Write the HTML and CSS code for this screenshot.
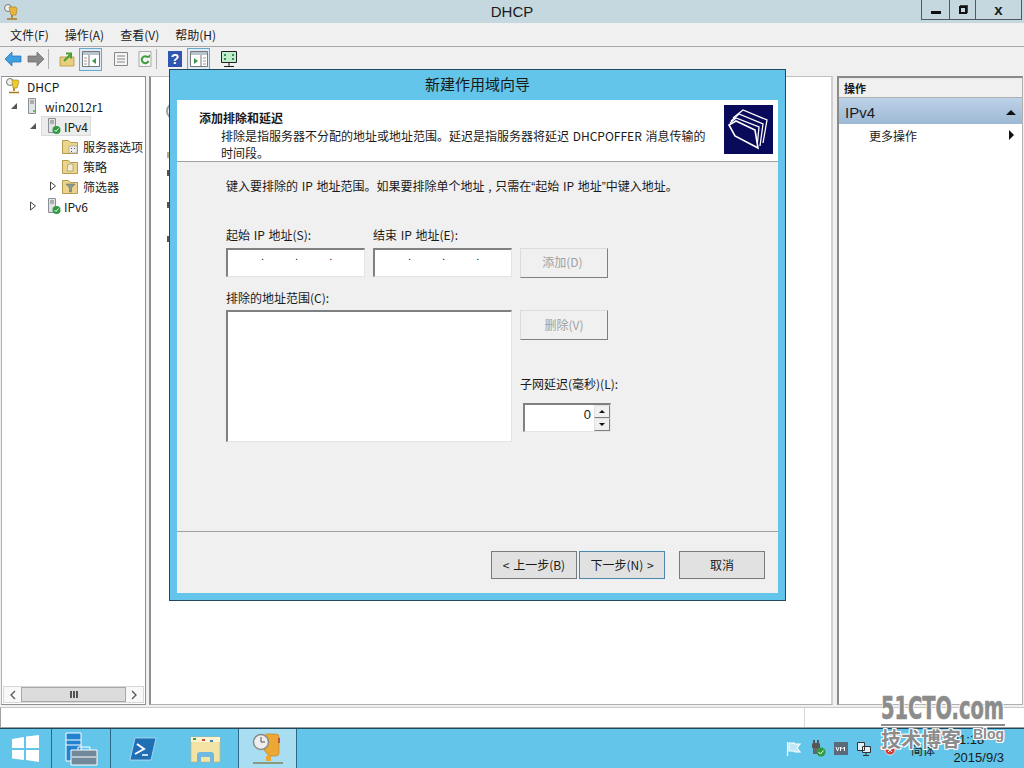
FILE: index.html
```html
<!DOCTYPE html>
<html lang="zh-CN">
<head>
    <meta charset="UTF-8">
    <title>DHCP</title>
    <link rel="stylesheet" href="styles.css">
</head>
<body>
    <div class="titlebar">
        <svg class="app-icon" width="16" height="18" viewBox="0 0 16 18"><circle cx="5" cy="5" r="3.500" fill="#eee" stroke="#777"/><path d="M6 4h7l1 2-1 6H8z" fill="#e8b53c" stroke="#a87a1c" stroke-width=".6"/><path d="M9 12v3M4 16h10" stroke="#a87a1c" stroke-width="1.600"/></svg>
        <span class="title-text">DHCP</span>
        <div class="win-btns">
            <div class="win-btn btn-min"><i></i></div>
            <div class="win-btn btn-max"><i></i></div>
            <div class="win-btn btn-close">x</div>
        </div>
    </div>
    <div class="menubar">
        <span>文件(F)</span>
        <span>操作(A)</span>
        <span>查看(V)</span>
        <span>帮助(H)</span>
    </div>
    <div class="toolbar">
        <svg class="tb-back" width="18" height="16" viewBox="0 0 18 16"><path d="M1 8l7-7v4h9v6H8v4z" fill="#3f9fe0" stroke="#1f6fb0" stroke-width=".7"/></svg>
        <svg class="tb-forward" width="18" height="16" viewBox="0 0 18 16"><path d="M17 8l-7-7v4H1v6h9v4z" fill="#8a8a8a" stroke="#666" stroke-width=".7"/></svg>
        <div class="tb-sep tb-sep-a"></div>
        <svg class="tb-up" width="16" height="16" viewBox="0 0 16 16"><path d="M1 6h14v9H1z" fill="#e9cf7d" stroke="#a98b35" stroke-width=".7"/><path d="M5 10l6-6M7 2.500h5v5" fill="none" stroke="#4d9e2e" stroke-width="2"/></svg>
        <div class="tb-toggle"><svg width="18" height="16" viewBox="0 0 18 16"><path d="M.5.500h17v15H.5z" fill="#fff" stroke="#777"/><path d="M1 1h16v3H1z" fill="#b9c4cc"/><path d="M7 4v11" stroke="#777"/><path d="M2 7h3M2 10h3M2 13h3" stroke="#999"/><path d="M14 7v6l-4-3z" fill="#3a9a4a"/></svg></div>
        <svg class="tb-list" width="16" height="16" viewBox="0 0 16 16"><path d="M1.500 1.500h13v13h-13z" fill="#f4f4f4" stroke="#888"/><path d="M4 5h8M4 8h8M4 11h8" stroke="#888"/></svg>
        <svg class="tb-refresh" width="14" height="16" viewBox="0 0 14 16"><path d="M1 .5h12v15H1z" fill="#f4f4f4" stroke="#aaa"/><path d="M10 6.500A3.500 3.500 0 1 0 10.500 10" fill="none" stroke="#3d9a3d" stroke-width="2"/><path d="M8 6.500h4v-3z" fill="#3d9a3d"/></svg>
        <div class="tb-sep tb-sep-b"></div>
        <div class="tb-help">?</div>
        <div class="tb-toggle tb-toggle-b"><svg width="18" height="16" viewBox="0 0 18 16"><path d="M.5.500h17v15H.5z" fill="#fff" stroke="#777"/><path d="M1 1h16v3H1z" fill="#b9c4cc"/><path d="M11 4v11" stroke="#777"/><path d="M13 7h3M13 10h3M13 13h3" stroke="#999"/><path d="M4 7v6l4-3z" fill="#3a9a4a"/></svg></div>
        <svg class="tb-monitor" width="16" height="17" viewBox="0 0 16 17"><path d="M.5.500h15v11H.5z" fill="#bfeecb" stroke="#222"/><path d="M3 3h2v2H3zM3 7h2v2H3zM11 3h2v2h-2zM11 7h2v2h-2z" fill="#3a8a5a"/><path d="M8 12v3M3 15.500h10" stroke="#222"/></svg>
    </div>

    <div class="workspace">
        <div class="tree-pane">
            <div class="tree">
                <div class="tree-row root-row">
                    <svg class="node-icon" width="16" height="18" viewBox="0 0 16 18"><circle cx="5" cy="5" r="3.500" fill="#eee" stroke="#777"/><path d="M7 3h6l1 2-2 6H8z" fill="#e8cf2c" stroke="#a87a1c" stroke-width=".6"/><path d="M9 11v3M4 15.500h10" stroke="#a87a1c" stroke-width="1.600"/></svg>
                    <span>DHCP</span>
                </div>
                <div class="tree-row indent-1">
                    <svg class="tw" width="6" height="8" viewBox="0 0 6 8"><path d="M6 1v6H0z" fill="#555"/></svg>
                    <svg class="node-icon" width="12" height="16" viewBox="0 0 12 16"><path d="M2.500.5h7v15h-7z" fill="#dfe3e6" stroke="#8a8f94"/><path d="M4 3h4M4 5h4" stroke="#777"/><circle cx="8" cy="13" r="1" fill="#4a4"/></svg>
                    <span>win2012r1</span>
                </div>
                <div class="tree-row indent-2">
                    <svg class="tw" width="6" height="8" viewBox="0 0 6 8"><path d="M6 1v6H0z" fill="#555"/></svg>
                    <span class="node-box selected">
                        <svg class="node-icon" width="14" height="17" viewBox="0 0 14 17"><path d="M1.500.5h7v14h-7z" fill="#dfe3e6" stroke="#8a8f94"/><path d="M3 3h4M3 5h4" stroke="#777"/><circle cx="9.500" cy="12" r="4" fill="#2f9a3f"/><path d="M7.500 12l1.500 1.500 2.500-3" fill="none" stroke="#fff"/></svg>
                        <span>IPv4</span>
                    </span>
                </div>
                <div class="tree-row indent-3">
                    <svg class="node-icon" width="16" height="15" viewBox="0 0 16 15"><path d="M.5 14.500v-13h6l2 2h7v11z" fill="#ecd48a" stroke="#b79c50"/><path d="M7 7h8v7H7z" fill="#eee" stroke="#999" stroke-width=".6"/><path d="M9 9h1v1H9zM12 9h1v1h-1zM9 12h1v1H9z" fill="#555"/></svg>
                    <span>服务器选项</span>
                </div>
                <div class="tree-row indent-3">
                    <svg class="node-icon" width="16" height="15" viewBox="0 0 16 15"><path d="M.5 14.500v-13h6l2 2h7v11z" fill="#ecd48a" stroke="#b79c50"/><path d="M6 5h5v7H5z" fill="#f5ecc8" stroke="#888" stroke-width=".6"/></svg>
                    <span>策略</span>
                </div>
                <div class="tree-row indent-2b">
                    <svg class="tw" width="6" height="10" viewBox="0 0 6 10"><path d="M.5 1l5 4-5 4z" fill="#fff" stroke="#444"/></svg>
                    <svg class="node-icon" width="16" height="15" viewBox="0 0 16 15"><path d="M.5 14.500v-13h6l2 2h7v11z" fill="#ecd48a" stroke="#b79c50"/><path d="M4 5h9l-3.500 4v4h-2V9z" fill="#8b9a8f" stroke="#666" stroke-width=".5"/></svg>
                    <span>筛选器</span>
                </div>
                <div class="tree-row indent-2">
                    <svg class="tw" width="6" height="10" viewBox="0 0 6 10"><path d="M.5 1l5 4-5 4z" fill="#fff" stroke="#444"/></svg>
                    <span class="node-box">
                        <svg class="node-icon" width="14" height="17" viewBox="0 0 14 17"><path d="M1.500.5h7v14h-7z" fill="#dfe3e6" stroke="#8a8f94"/><path d="M3 3h4M3 5h4" stroke="#777"/><circle cx="9.500" cy="12" r="4" fill="#2f9a3f"/><path d="M7.500 12l1.500 1.500 2.500-3" fill="none" stroke="#fff"/></svg>
                        <span>IPv6</span>
                    </span>
                </div>
            </div>
            <div class="hscroll">
                <div class="sb-btn">
                    <svg width="7" height="10" viewBox="0 0 7 10"><path d="M6 1L2 5l4 4" fill="none" stroke="#555" stroke-width="1.300"/></svg>
                </div>
                <div class="sb-thumb"><i></i><i></i><i></i></div>
                <div class="sb-btn">
                    <svg width="7" height="10" viewBox="0 0 7 10"><path d="M1 1l4 4-4 4" fill="none" stroke="#555" stroke-width="1.300"/></svg>
                </div>
            </div>
        </div>
        <div class="middle-pane">
            <!-- only the left edge of this page shows beside the dialog -->
            <div class="mid-logo"></div>
            <i class="mid-mark"></i>
            <i class="mid-mark"></i>
            <i class="mid-mark mid-mark-b"></i>
            <i class="mid-mark mid-mark-c"></i>
        </div>
        <div class="action-pane">
            <div class="action-head">操作</div>
            <div class="action-group">
                <span>IPv4</span>
                <i class="tri-up"></i>
            </div>
            <div class="action-item">
                <span>更多操作</span>
                <i class="tri-right"></i>
            </div>
        </div>
    </div>

    <div class="statusbar">
        <div class="status-cell"></div>
    </div>

    <div class="taskbar">
        <div class="task start">
            <svg width="28" height="27" viewBox="0 0 28 27"><path d="M0 4l12-2v11H0zM14 1.500L27 0v13H14zM0 15h12v10L0 23.500zM14 15h13v12l-13-2z" fill="#fff"/></svg>
        </div>
        <div class="task">
            <svg width="34" height="34" viewBox="0 0 34 34"><path d="M2 1h15v28H2z" fill="#2183d0" stroke="#fff"/><path d="M2 8h15M2 13h15" stroke="#fff"/><path d="M7 18h26v15H7z" fill="#71899a" stroke="#fff"/><path d="M14 18v-3h12v3" fill="none" stroke="#fff"/><path d="M8 25h24" stroke="#fff"/></svg>
        </div>
        <div class="task task-plain">
            <svg width="28" height="24" viewBox="0 0 28 24"><path d="M6 1h21l-5 22H1z" fill="#1f6fb5" stroke="#cfe6f5" stroke-width=".7"/><path d="M8 7l7 5-9 5" fill="none" stroke="#fff" stroke-width="2"/><path d="M13 18h6" stroke="#fff" stroke-width="1.500"/></svg>
        </div>
        <div class="task task-plain">
            <svg width="32" height="30" viewBox="0 0 32 30"><path d="M1 3h29v25H1z" fill="#f3e3a4" stroke="#c9b06a" stroke-width=".6"/><path d="M1 3h29v5H1z" fill="#fdf4cf"/><path d="M3 4h3v2H3z" fill="#3aa03a"/><path d="M12 5h3v2h-3z" fill="#c9503a"/><path d="M20 6h3v2h-3z" fill="#3a82c0"/><path d="M7 28v-7a3 3 0 0 1 3-3h11a3 3 0 0 1 3 3v7h-4v-5h-9v5z" fill="#6fb8e0"/></svg>
        </div>
        <div class="task active">
            <svg width="32" height="36" viewBox="0 0 32 36"><path d="M14 3h10a3 3 0 0 1 3 3v16a3 3 0 0 1-3 3H17l-5-6z" fill="#eba834" stroke="#b87c1c" stroke-width=".6"/><circle cx="9" cy="11" r="7.500" fill="#eee" stroke="#8a8a8a" stroke-width="1.500"/><path d="M9 6v5h4" fill="none" stroke="#555"/><path d="M26 7h2v5h-2z" fill="#c9503a"/><path d="M14 25h5v5h-5z" fill="#eba834"/><path d="M1 32h30" stroke="#8a9a7a" stroke-width="2"/></svg>
        </div>
        <div class="tray">
            <svg width="16" height="14" viewBox="0 0 16 14"><path d="M1.500 0v14" stroke="#fff" stroke-width="1.200"/><path d="M3 1h5l1 1h5l-3 4 3 4H9L8 9H3z" fill="#bfe8f6" stroke="#fff" stroke-width="1.200"/></svg>
            <svg width="16" height="17" viewBox="0 0 16 17"><path d="M3 0h2v3h2V0h2v3l1 1v4H2V4l1-1z" fill="#555"/><path d="M3 8h6v6H3z" fill="#666"/><circle cx="11" cy="12" r="4.500" fill="#2f9a3f"/><path d="M8.500 12l2 2 3-3.500" fill="none" stroke="#fff"/></svg>
            <svg width="14" height="13" viewBox="0 0 14 13"><path d="M0 0h14v13H0z" fill="#5a6a78"/><path d="M2 5l1.500 4L5 5M6.500 9V5l2 2 2-2v4" fill="none" stroke="#fff"/></svg>
            <svg width="16" height="16" viewBox="0 0 16 16"><path d="M1.500 1.500h7v8h-7zM6.500 5.500h8v6h-8z" fill="#dff0f8" stroke="#333"/><path d="M10 11.500v3M7 14.500h6" stroke="#333"/></svg>
            <svg width="16" height="15" viewBox="0 0 16 15"><path d="M0 5h3l4-3v10L3 9H0z" fill="#eee" stroke="#777" stroke-width=".5"/><circle cx="10" cy="9" r="5" fill="#d23b3b" stroke="#fff" stroke-width=".7"/><path d="M8 7l4 4M12 7l-4 4" stroke="#fff"/></svg>
            <span class="ime">简体</span>
            <div class="clock">
                <span>21:18</span>
                <span>2015/9/3</span>
            </div>
        </div>
    </div>

    <!-- wizard dialog sits over the mmc window -->
    <div class="wizard">
        <div class="wizard-title">新建作用域向导</div>
        <div class="wizard-body">
            <div class="wizard-head">
                <div class="head-text">
                    <div class="head-title">添加排除和延迟</div>
                    <div class="head-desc">排除是指服务器不分配的地址或地址范围。延迟是指服务器将延迟 DHCPOFFER 消息传输的时间段。</div>
                </div>
                <svg class="head-logo" width="49" height="49" viewBox="0 0 49 49"><path d="M0 0h49v49H0z" fill="#0a0a5a"/><path d="M9 13L19 5l24 10-4 23" fill="none" stroke="#fff" stroke-width="1.300"/><path d="M7 16l8-7 24 10-3 22" fill="#0a0a5a" stroke="#fff" stroke-width="1.300"/><path d="M6 18l6-5 23 9-2 20" fill="#0a0a5a" stroke="#fff" stroke-width="1.300"/><path d="M5 20l7-4 19 9 3 18-23-12z" fill="#0a0a5a" stroke="#fff" stroke-width="1.600"/></svg>
            </div>
            <div class="wizard-main">
                <p class="intro">键入要排除的 IP 地址范围。如果要排除单个地址 , 只需在<span class="quote">“</span>起始 IP 地址<span class="quote">”</span>中键入地址。</p>
                <div class="ip-row">
                    <div class="field">
                        <label>起始 IP 地址(S):</label>
                        <div class="ip-box"><i>.</i><i>.</i><i>.</i></div>
                    </div>
                    <div class="field">
                        <label>结束 IP 地址(E):</label>
                        <div class="ip-box"><i>.</i><i>.</i><i>.</i></div>
                    </div>
                    <button class="btn btn-disabled btn-add">添加(D)</button>
                </div>
                <label class="range-label">排除的地址范围(C):</label>
                <div class="range-row">
                    <div class="range-list"></div>
                    <div class="range-side">
                        <button class="btn btn-disabled">删除(V)</button>
                        <label class="delay-label">子网延迟(毫秒)(L):</label>
                        <div class="spin">
                            <span class="spin-val">0</span>
                            <div class="spin-btns">
                                <div class="spin-btn"><i class="arrow-up"></i></div>
                                <div class="spin-btn"><i class="arrow-down"></i></div>
                            </div>
                        </div>
                    </div>
                </div>
            </div>
            <div class="wizard-foot">
                <button class="btn btn-nav">&lt; 上一步(B)</button>
                <button class="btn btn-nav btn-default">下一步(N) &gt;</button>
                <button class="btn btn-nav btn-cancel">取消</button>
            </div>
        </div>
    </div>

    <div class="watermark">
        <div class="wm-main"><span>51CTO.com</span></div>
        <div class="wm-sub">技术博客<span>Blog</span></div>
    </div>
</body>
</html>
```

FILE: styles.css
```css
* {
    box-sizing: border-box;
}
body {
    font-family: "Noto Sans CJK SC", "Liberation Sans", sans-serif;
    font-size: 12px;
    color: #1a1a1a;
    background-color: #f0f0f0;
    margin: 0;
    width: 1024px;
    height: 768px;
    overflow: hidden;
    display: flex;
    flex-direction: column;
    position: relative;
}
.titlebar {
    height: 23px;
    background-color: #c5d7df;
    display: flex;
    align-items: flex-start;
    justify-content: center;
    position: relative;
    flex: none;
}
.app-icon {
    position: absolute;
    left: 3px;
    top: 3px;
}
.title-text {
    font-family: "Liberation Sans", sans-serif;
    font-size: 15px;
    line-height: 23px;
}
.win-btns {
    position: absolute;
    right: 2px;
    top: 0;
    height: 20px;
    display: flex;
    border: 1px solid #4e5a60;
    border-top: none;
}
.win-btn {
    height: 19px;
    display: flex;
    align-items: center;
    justify-content: center;
    border-left: 1px solid #4e5a60;
}
.btn-min {
    width: 27px;
    border-left: none;
}
.btn-min i {
    width: 10px;
    height: 3px;
    margin-top: 5px;
    background-color: #111;
}
.btn-max {
    width: 26px;
}
.btn-max i {
    width: 8px;
    height: 8px;
    border: 2px solid #111;
    box-shadow: 1px -1px 0 0 #444;
}
.btn-close {
    width: 46px;
    font: bold 15px "Liberation Sans", sans-serif;
}
.menubar {
    height: 24px;
    flex: none;
    display: flex;
    align-items: center;
    gap: 16px;
    padding-left: 10px;
    border-bottom: 1px solid #a8a8a8;
}
.toolbar {
    height: 24px;
    flex: none;
    display: flex;
    align-items: center;
    padding-left: 4px;
}
.tb-forward {
    margin-left: 5px;
}
.tb-sep {
    width: 1px;
    height: 20px;
    background-color: #b0b0b0;
}
.tb-sep-a {
    margin-left: 3px;
}
.tb-sep-b {
    margin-left: 4px;
}
.tb-up {
    margin-left: 10px;
}
.tb-toggle {
    width: 23px;
    height: 23px;
    margin-left: 4px;
    background-color: #dcebf5;
    border: 1px solid #68a8cf;
    display: flex;
    align-items: center;
    justify-content: center;
}
.tb-toggle-b {
    margin-left: 5px;
}
.tb-list {
    margin-left: 11px;
}
.tb-refresh {
    margin-left: 9px;
}
.tb-monitor {
    margin-left: 11px;
}
.tb-help {
    width: 14px;
    height: 16px;
    margin-left: 11px;
    background-color: #2f56b0;
    color: #fff;
    font: bold 14px/16px "Liberation Sans", sans-serif;
    text-align: center;
}
.workspace {
    flex: 1;
    min-height: 0;
    display: flex;
    padding: 5px 0 2px 0;
}
.tree-pane {
    width: 145px;
    margin-left: 1px;
    background-color: #fff;
    border: 1px solid #8f8f8f;
    border-left-color: #b0b0b0;
    display: flex;
    flex-direction: column;
    justify-content: space-between;
}
.tree {
    margin-top: -1px;
}
.tree-row {
    height: 20px;
    display: flex;
    align-items: center;
    white-space: nowrap;
}
.node-icon {
    flex: none;
    margin-right: 5px;
}
.tw {
    flex: none;
}
.root-row {
    padding-left: 3px;
}
.root-row .node-icon {
    margin-right: 6px;
}
.indent-1 {
    padding-left: 9px;
}
.indent-1 .tw {
    margin-right: 9px;
}
.indent-1 .node-icon {
    margin-right: 7px;
}
.indent-2 {
    padding-left: 28px;
}
.indent-2 .tw {
    margin-right: 5px;
}
.indent-2b {
    padding-left: 48px;
}
.indent-2b .tw {
    margin-right: 6px;
}
.indent-3 {
    padding-left: 60px;
}
.node-box {
    display: flex;
    align-items: center;
    height: 20px;
    padding: 0 2px 0 5px;
    border: 1px solid transparent;
}
.node-box .node-icon {
    margin-right: 3px;
}
.selected {
    background-color: #ececec;
    border-color: #dcdcdc;
}
.hscroll {
    height: 17px;
    margin: 0 1px 1px 1px;
    display: flex;
    border: 1px solid #d8d8d8;
    background-color: #f0f0f0;
}
.sb-btn {
    width: 17px;
    display: flex;
    align-items: center;
    justify-content: center;
    background-color: #f8f8f8;
}
.sb-thumb {
    flex: 1;
    background-color: #dcdcdc;
    border: 1px solid #a8a8a8;
    display: flex;
    gap: 1px;
    align-items: center;
    justify-content: center;
}
.sb-thumb i {
    width: 2px;
    height: 7px;
    background-color: #555;
}
.middle-pane {
    width: 684px;
    margin-left: 3px;
    padding: 25px 0 0 15px;
    background-color: #fff;
    border-left: 2px solid #909090;
    border-top: 1px solid #c0c0c0;
    border-right: 2px solid #d0d0d0;
    border-bottom: 1px solid #b0b0b0;
}
.mid-logo {
    width: 18px;
    height: 18px;
    border: 2px solid #9aa0a6;
    border-radius: 50%;
}
.mid-mark {
    display: block;
    width: 3px;
    height: 6px;
    margin: 12px 0 0 1px;
    background-color: #555;
}
.mid-logo + .mid-mark {
    margin-top: 32px;
    background-color: #b8ab7c;
}
.mid-mark-b {
    margin-top: 26px;
}
.mid-mark-c {
    margin-top: 28px;
}
.action-pane {
    flex: 1;
    margin: 0 1px 0 4px;
    background-color: #fff;
    border-top: 2px solid #8a8a8a;
    border-left: 2px solid #8a8a8a;
    border-right: 1px solid #b0b0b0;
    border-bottom: 1px solid #b0b0b0;
}
.action-head {
    height: 20px;
    background-color: #f0f0f0;
    border-top: 1px solid #e8e8e8;
    border-bottom: 1px solid #b0b0b0;
    font-weight: 700;
    font-size: 11px;
    line-height: 19px;
    padding-left: 5px;
}
.action-group {
    height: 26px;
    background: linear-gradient(#bcd2e8, #9db8d4);
    display: flex;
    align-items: center;
    justify-content: space-between;
    padding: 2px 6px 0 6px;
    font-family: "Liberation Sans", sans-serif;
    font-size: 15px;
}
.tri-up {
    width: 0;
    height: 0;
    border-left: 5px solid transparent;
    border-right: 5px solid transparent;
    border-bottom: 5px solid #111;
}
.action-item {
    height: 22px;
    display: flex;
    align-items: center;
    justify-content: space-between;
    padding: 0 8px 0 30px;
}
.tri-right {
    width: 0;
    height: 0;
    border-top: 5px solid transparent;
    border-bottom: 5px solid transparent;
    border-left: 5px solid #111;
}
.statusbar {
    height: 21px;
    flex: none;
    background-color: #fff;
    border-left: 1px solid #a0a0a0;
    border-top: 1px solid #c8c8c8;
    border-bottom: 1px solid #a0a0a0;
    display: flex;
    justify-content: flex-end;
}
.status-cell {
    width: 220px;
    border-left: 1px solid #d8d8d8;
}
.taskbar {
    height: 40px;
    flex: none;
    background-color: #62c5e9;
    border-top: 1px solid #1f4a5e;
    display: flex;
}
.task {
    width: 59px;
    display: flex;
    align-items: center;
    justify-content: center;
    border-right: 1px solid #2a6a86;
}
.task.start {
    width: 52px;
}
.task-plain {
    width: 63px;
    border-right: none;
}
.task.active {
    background-color: #a9def2;
    border-left: 1px solid #2a6a86;
    margin-left: 1px;
}
.tray {
    flex: 1;
    display: flex;
    align-items: center;
    justify-content: flex-end;
    gap: 8px;
    padding-right: 20px;
    position: relative;
}
.ime {
    position: absolute;
    right: 89px;
    top: 12px;
}
.clock {
    display: flex;
    flex-direction: column;
    align-items: center;
    width: 72px;
    margin-left: 28px;
    font-family: "Liberation Sans", sans-serif;
    font-size: 13px;
    line-height: 18px;
}
.clock span:last-child {
    width: 100%;
    text-align: right;
}
.wizard {
    position: absolute;
    left: 169px;
    top: 69px;
    width: 617px;
    height: 532px;
    background-color: #62c5e9;
    border: 1px solid #1f4a5e;
    padding: 0 7px 7px 7px;
    display: flex;
    flex-direction: column;
    word-spacing: 1px;
}
.wizard-title {
    height: 30px;
    font-size: 15px;
    line-height: 28px;
    text-align: center;
    flex: none;
}
.wizard-body {
    flex: 1;
    min-height: 0;
    background-color: #f0f0f0;
    display: flex;
    flex-direction: column;
}
.wizard-head {
    height: 62px;
    flex: none;
    background-color: #fff;
    border-bottom: 1px solid #a0a0a0;
    display: flex;
    justify-content: space-between;
    padding: 5px 5px 0 22px;
}
.head-title {
    font-weight: 700;
    font-size: 12px;
    line-height: 18px;
    margin-top: 4px;
}
.head-desc {
    width: 490px;
    margin-left: 22px;
    line-height: 17px;
}
.wizard-main {
    flex: 1;
    padding: 15px 0 0 49px;
    min-height: 0;
}
.intro {
    margin: 0;
    line-height: 18px;
    height: 42px;
}
.quote {
    font-family: "Liberation Sans", sans-serif;
}
label {
    display: block;
}
.ip-row {
    display: flex;
    align-items: flex-end;
    margin-top: 7px;
}
.field {
    width: 147px;
    padding-bottom: 1px;
}
.field label {
    line-height: 17px;
    margin-bottom: 5px;
}
.ip-box {
    width: 139px;
    height: 29px;
    background-color: #fff;
    border: 1px solid;
    border-width: 2px 1px 1px 2px;
    border-color: #808080 #e4e4e4 #e4e4e4 #808080;
    display: flex;
    padding: 0 0 0 33px;
    gap: 31px;
    font-family: "Liberation Sans", sans-serif;
    font-size: 11px;
    line-height: 12px;
}
.ip-box i {
    font-style: normal;
}
.btn {
    font-family: inherit;
    font-size: 12px;
    word-spacing: inherit;
    color: #1a1a1a;
    padding: 0 0 1px 0;
    cursor: pointer;
}
.btn-disabled {
    width: 88px;
    height: 30px;
    background-color: #f0f0f0;
    color: #a0a0a0;
    border: 1px solid;
    border-color: #dcdcdc #7f7f7f #7f7f7f #dcdcdc;
}
.btn-add {
    padding: 0 3px 3px 0;
}
.range-label {
    margin-top: 11px;
    line-height: 17px;
}
.range-row {
    display: flex;
    margin-top: 4px;
}
.range-list {
    width: 286px;
    height: 132px;
    background-color: #fff;
    border: 1px solid;
    border-width: 2px 1px 1px 2px;
    border-color: #808080 #e4e4e4 #e4e4e4 #808080;
    flex: none;
}
.range-side {
    margin-left: 8px;
}
.delay-label {
    margin-top: 35px;
    line-height: 17px;
}
.spin {
    width: 88px;
    height: 29px;
    margin: 11px 0 0 3px;
    background-color: #fff;
    border: 1px solid;
    border-width: 2px 1px 1px 2px;
    border-color: #808080 #e4e4e4 #e4e4e4 #808080;
    display: flex;
    justify-content: space-between;
}
.spin-val {
    flex: 1;
    text-align: right;
    padding: 2px 3px 0 0;
    font-family: "Liberation Sans", sans-serif;
    font-size: 13px;
}
.spin-btns {
    width: 16px;
    display: flex;
    flex-direction: column;
}
.spin-btn {
    height: 13px;
    flex: none;
    background-color: #f0f0f0;
    border: 1px solid;
    border-color: #e0e0e0 #7f7f7f #7f7f7f #e0e0e0;
    display: flex;
    align-items: center;
    justify-content: center;
}
.arrow-up {
    width: 0;
    height: 0;
    border-left: 3px solid transparent;
    border-right: 3px solid transparent;
    border-bottom: 3px solid #111;
}
.arrow-down {
    width: 0;
    height: 0;
    border-left: 3px solid transparent;
    border-right: 3px solid transparent;
    border-top: 3px solid #111;
}
.wizard-foot {
    height: 62px;
    flex: none;
    border-top: 1px solid #a0a0a0;
    display: flex;
    padding: 19px 0 0 314px;
}
.btn-nav {
    width: 86px;
    height: 28px;
    background-color: #e1e1e1;
    border: 1px solid #7a7a7a;
    padding-bottom: 2px;
}
.btn-default {
    margin-left: 2px;
    border-color: #4f87a8;
    box-shadow: 0 0 0 1px #e6f2f8;
}
.btn-cancel {
    margin-left: 14px;
}
.watermark {
    position: absolute;
    left: 881px;
    top: 693px;
    width: 143px;
    color: #8c8c8c;
    font-weight: 700;
    text-shadow: 1px 1px 0 #fff, -1px -1px 0 #fff, 1px -1px 0 #fff, -1px 1px 0 #fff;
}
.wm-main {
    width: 124px;
    height: 33px;
    border-bottom: 2px solid #8c8c8c;
    font-family: "Liberation Sans Narrow", "DejaVu Sans Condensed", sans-serif;
    font-size: 27px;
    line-height: 27px;
    white-space: nowrap;
}
.wm-main span {
    display: inline-block;
    transform: scale(.8, 1.15);
    transform-origin: left top;
    -webkit-text-stroke: .5px #8c8c8c;
}
.wm-sub {
    font-size: 20px;
    line-height: 26px;
    white-space: nowrap;
}
.wm-sub span {
    font-family: "Liberation Sans", sans-serif;
    font-size: 14px;
    position: relative;
    top: -8px;
    margin-left: 12px;
}
```
